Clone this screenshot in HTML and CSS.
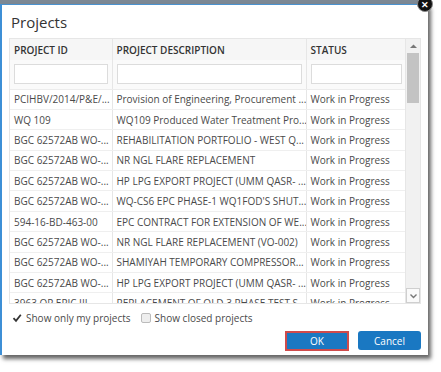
FILE: index.html
```html
<!DOCTYPE html>
<html lang="en">
<head>
<meta charset="UTF-8">
<title>Projects</title>
<link rel="stylesheet" href="styles.css">
</head>
<body>
<div class="overlay">
<div class="dialog">
<div class="close-btn">&#x2715;</div>
<div class="dialog-title">Projects</div>
<div class="grid-ctnr">
<div class="grid-body">
<table class="grid">
<colgroup><col class="c-id"><col class="c-desc"><col class="c-status"></colgroup>
<thead>
<tr class="head-row"><th>PROJECT ID</th><th>PROJECT DESCRIPTION</th><th>STATUS</th></tr>
<tr class="filter-row"><td><div class="filter-input"></div></td><td><div class="filter-input"></div></td><td><div class="filter-input"></div></td></tr>
</thead>
<tbody>
<tr><td>PCIHBV/2014/P&amp;E/...</td><td>Provision of Engineering, Procurement ...</td><td>Work in Progress</td></tr>
<tr><td>WQ 109</td><td>WQ109 Produced Water Treatment Pro...</td><td>Work in Progress</td></tr>
<tr><td>BGC 62572AB WO-...</td><td>REHABILITATION PORTFOLIO - WEST Q...</td><td>Work in Progress</td></tr>
<tr><td>BGC 62572AB WO-...</td><td>NR NGL FLARE REPLACEMENT</td><td>Work in Progress</td></tr>
<tr><td>BGC 62572AB WO-...</td><td>HP LPG EXPORT PROJECT (UMM QASR- ...</td><td>Work in Progress</td></tr>
<tr><td>BGC 62572AB WO-...</td><td>WQ-CS6 EPC PHASE-1 WQ1FOD'S SHUT...</td><td>Work in Progress</td></tr>
<tr><td>594-16-BD-463-00</td><td>EPC CONTRACT FOR EXTENSION OF WE...</td><td>Work in Progress</td></tr>
<tr><td>BGC 62572AB WO-...</td><td>NR NGL FLARE REPLACEMENT (VO-002)</td><td>Work in Progress</td></tr>
<tr><td>BGC 62572AB WO-...</td><td>SHAMIYAH TEMPORARY COMPRESSOR...</td><td>Work in Progress</td></tr>
<tr><td>BGC 62572AB WO-...</td><td>HP LPG EXPORT PROJECT (UMM QASR- ...</td><td>Work in Progress</td></tr>
<tr><td>3963 OP EPIC III</td><td>REPLACEMENT OF OLD 3 PHASE TEST S...</td><td>Work in Progress</td></tr>
</tbody>
</table>
</div>
<div class="scrollbar">
<div class="scroll-btn">
<svg width="9" height="6" viewBox="0 0 9 6"><path d="M1 5 L4.5 1.5 L8 5 Z" fill="#777"/></svg>
</div>
<div class="scroll-track"><div class="scroll-thumb"></div></div>
<div class="scroll-btn down">
<svg width="9" height="6" viewBox="0 0 9 6"><path d="M1.5 1.5 L4.5 4.5 L7.5 1.5" fill="none" stroke="#777" stroke-width="1.4"/></svg>
</div>
</div>
</div>
<div class="options">
<label class="opt"><span class="chk checked"><svg width="10" height="10" viewBox="0 0 10 10"><path d="M1.5 5.2 L4 7.8 L8.8 1.8" fill="none" stroke="#333" stroke-width="1.8"/></svg></span>Show only my projects</label>
<label class="opt"><span class="chk"></span>Show closed projects</label>
</div>
<div class="actions">
<div class="btn btn-ok">OK</div>
<div class="btn">Cancel</div>
</div>
</div>
</div>
</body>
</html>
```
FILE: styles.css
```css
html,body{
margin:0px;
padding:0px;
background:#fff;
width:100%;
height:100%;
}
*{font-family:'Open Sans','Liberation Sans',sans-serif;box-sizing:border-box;}
.overlay{
width:430px;
border-top:4px solid #7c8894;
}
.dialog{
position:relative;
width:428px;
height:351px;
background:#fff;
border-top:1px solid #4a92cf;
border-left:2px solid #3d8fd6;
box-shadow:3px 4px 4px rgba(0,0,0,0.6);
padding:0 7px 0 7px;
display:flex;
flex-direction:column;
}
.close-btn{
position:absolute;
right:-5px;
top:-9px;
width:16px;
height:16px;
border-radius:64em;
background:#111;
color:#fff;
font-size:9px;
font-weight:bold;
display:flex;
align-items:center;
justify-content:center;
border:1px solid #888;
}
.dialog-title{
font-size:15px;
color:#333;
height:33px;
line-height:35px;
padding-left:2px;
}
.grid-ctnr{
display:flex;
height:266px;
border:1px solid #e6e6e6;
}
.grid-body{
width:396px;
overflow:hidden;
}
.grid{
border-collapse:collapse;
table-layout:fixed;
width:396px;
font-size:10px;
color:#4a4a4a;
}
.c-id{width:102px;}
.c-desc{width:194px;}
.c-status{width:100px;}
.grid th{
background:#f6f6f6;
font-weight:600;
color:#333;
text-align:left;
height:21px;
padding:0 4px;
border-right:1px solid #e6e6e6;
}
.grid td{
height:20.4px;
padding:0 4px;
white-space:nowrap;
overflow:hidden;
border-right:1px solid #e6e6e6;
border-bottom:1px solid #efefef;
}
.grid .filter-row td{
height:29px;
background:#fafafa;
border-bottom:1px solid #ececec;
}
.filter-input{
height:20px;
background:#fff;
border:1px solid #dcdcdc;
}
.scrollbar{
width:15px;
background:#f1f1f1;
display:flex;
flex-direction:column;
border-left:1px solid #e6e6e6;
}
.scroll-btn{
height:14px;
display:flex;
align-items:center;
justify-content:center;
}
.scroll-btn.down{
border:1px solid #cfcfcf;
background:#fafafa;
height:15px;
}
.scroll-track{
flex-grow:1;
}
.scroll-thumb{
height:50px;
background:#c3c3c3;
margin:0 1px;
}
.options{
display:flex;
align-items:center;
gap:10px;
height:27px;
font-size:10px;
color:#4a4a4a;
padding-left:3px;
}
.opt{
display:flex;
align-items:center;
gap:4px;
}
.chk{
width:10px;
height:10px;
border:1px solid #bbb;
background:#eee;
border-radius:2px;
display:flex;
align-items:center;
justify-content:center;
}
.chk.checked{
border:none;
background:none;
}
.actions{
display:flex;
justify-content:flex-end;
gap:9px;
}
.btn{
width:63px;
height:19px;
background:#1a78c2;
color:#fff;
font-size:10px;
border-radius:3px;
display:flex;
align-items:center;
justify-content:center;
}
.btn-ok{
width:64px;
height:20px;
border:2px solid #cf4b4b;
border-radius:0;
}
```
